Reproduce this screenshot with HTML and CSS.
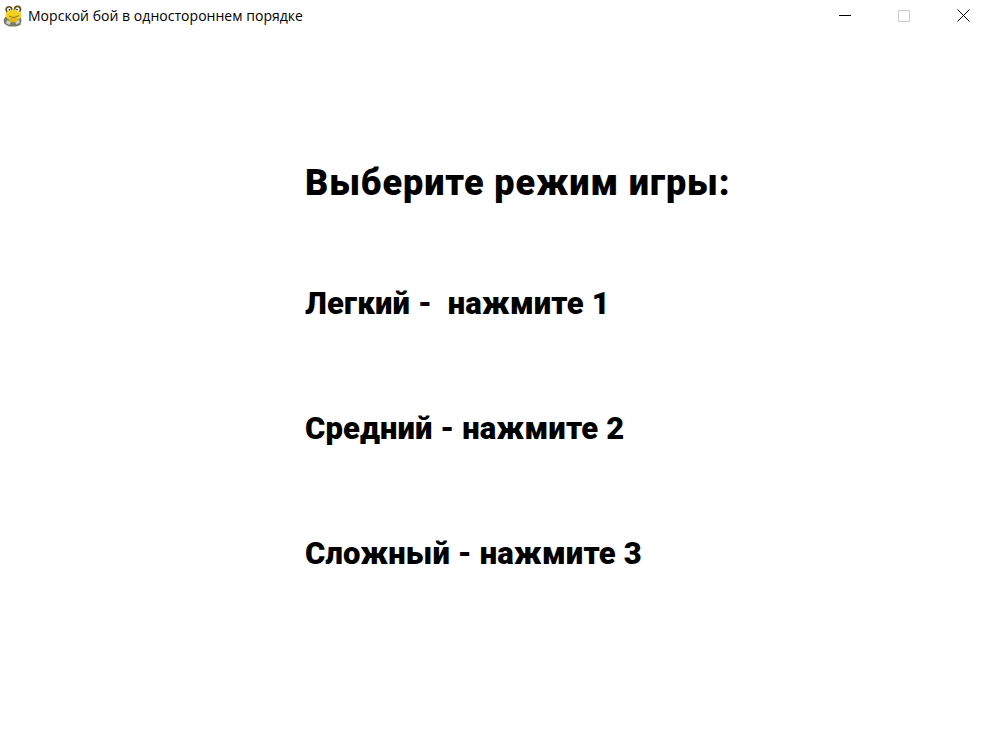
FILE: index.html
```html
<!DOCTYPE html>
<html lang="ru">
<head>
    <meta charset="UTF-8">
    <title>Морской бой в одностороннем порядке</title>
    <link rel="stylesheet" href="styles.css">
</head>
<body>
    <!-- Title bar -->
    <header class="titlebar">
        <svg class="app-icon" width="20" height="22" viewBox="0 0 20 22">
            <path d="M2 12 L.5 15 L1.5 19 L6 21.5 L13 21.5 L17.5 20 L18.5 15 L17 11 Z" fill="#77776a"/>
            <path d="M4 15 L8 16.5 L7 20 L3 18.5 Z M12 16 L16.5 14.5 L16.5 18 L13 19.5 Z" fill="#cfcfc2"/>
            <circle cx="6" cy="4.5" r="3.6" fill="#5f5212"/>
            <circle cx="14.5" cy="4.3" r="3.8" fill="#5f5212"/>
            <ellipse cx="10.5" cy="10" rx="8" ry="5.5" fill="#f2d21f"/>
            <ellipse cx="10.5" cy="15" rx="4" ry="2.5" fill="#e0b81a"/>
            <circle cx="6" cy="4.6" r="2" fill="#fff"/>
            <circle cx="14.5" cy="4.4" r="2.1" fill="#fff"/>
            <circle cx="6.5" cy="4.8" r=".9" fill="#222"/>
            <circle cx="14" cy="4.6" r=".9" fill="#222"/>
            <path d="M6 11 Q10.5 14 16 10.5" stroke="#8a7210" stroke-width="1" fill="none"/>
        </svg>
        <span class="title-text">Морской бой в одностороннем порядке</span>
        <div class="controls">
            <svg class="ctl" width="46" height="32" viewBox="0 0 46 32"><path d="M17 15.5 H29" stroke="#000" fill="none"/></svg>
            <svg class="ctl ctl-max" width="46" height="32" viewBox="0 0 46 32"><rect x="17.5" y="10.5" width="11" height="11" stroke="#ccc" fill="none"/></svg>
            <svg class="ctl" width="46" height="32" viewBox="0 0 46 32"><path d="M17.5 9.5 L29.5 21.5 M29.5 9.5 L17.5 21.5" stroke="#000" fill="none"/></svg>
        </div>
    </header>

    <!-- Menu -->
    <main class="menu">
        <h1>Выберите режим игры:</h1>
        <p>Легкий -&nbsp; нажмите 1</p>
        <p>Средний - нажмите 2</p>
        <p>Сложный - нажмите 3</p>
    </main>
</body>
</html>
```

FILE: styles.css
```css
html, body {
    margin: 0;
    padding: 0;
    height: 100%;
}
body {
    background-color: white;
    color: black;
    font-family: Roboto, "Noto Sans", sans-serif;
    overflow: hidden;
}
.titlebar {
    display: flex;
    align-items: center;
    height: 32px;
    padding-left: 3px;
}
.app-icon {
    flex: none;
    margin-right: 5px;
}
.title-text {
    font-family: "Open Sans", "Noto Sans", sans-serif;
    font-size: 14px;
    letter-spacing: 0.03px;
    color: #000;
    position: relative;
    top: -1px;
}
.controls {
    display: flex;
    margin-left: auto;
    margin-right: -1px;
}
.ctl {
    display: block;
    margin-left: 13px;
}
.menu {
    padding: 129px 0 0 305px;
}
.menu h1 {
    margin: 0 0 80px;
    font-size: 36px;
    font-weight: 900;
    letter-spacing: 0.9px;
    line-height: 44px;
}
.menu p {
    margin: 0 0 87px;
    font-size: 31px;
    font-weight: 900;
    letter-spacing: 0.13px;
    line-height: 38px;
}
```
